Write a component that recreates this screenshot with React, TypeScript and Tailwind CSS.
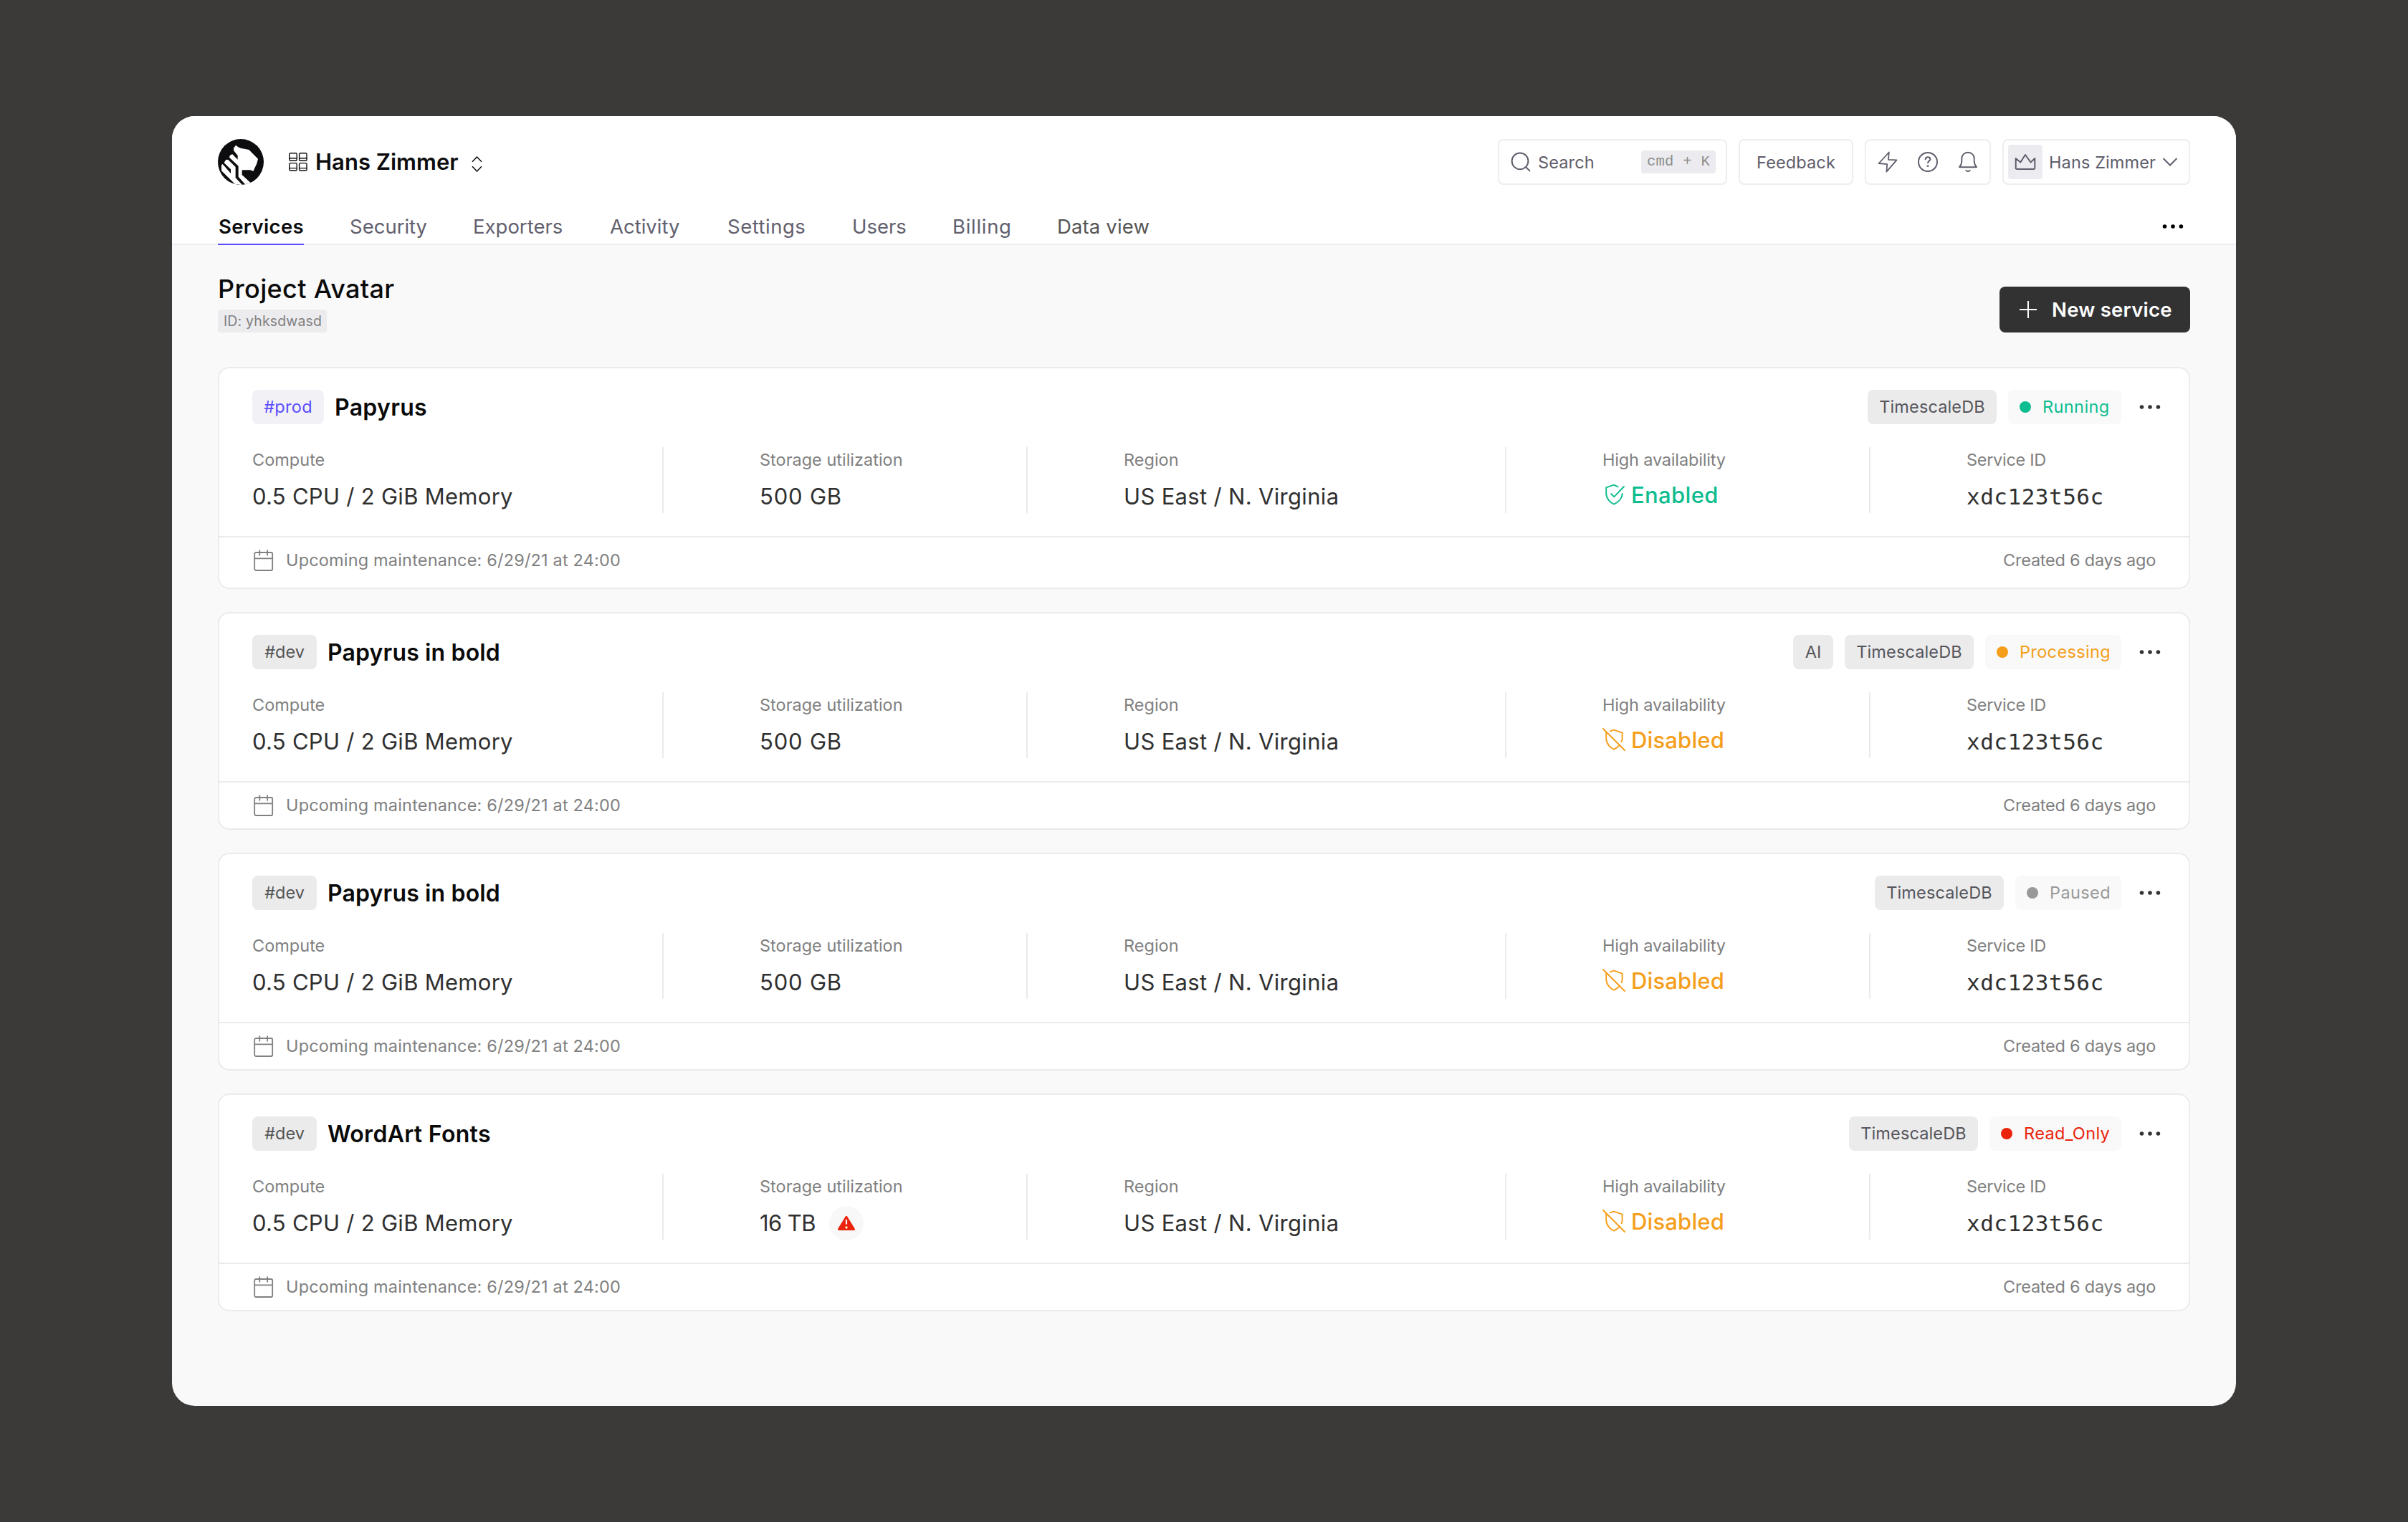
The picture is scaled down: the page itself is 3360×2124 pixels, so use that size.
import React from "react";

const stroke = {
  fill: "none",
  stroke: "currentColor",
  strokeWidth: 2,
  strokeLinecap: "round" as const,
  strokeLinejoin: "round" as const,
};

function Logo() {
  return (
    <svg className="size-16 shrink-0" viewBox="0 0 192 192">
      <defs>
        <clipPath id="logo-disc">
          <circle cx="96" cy="96" r="96" />
        </clipPath>
      </defs>
      <g clipPath="url(#logo-disc)">
        <rect width="192" height="192" fill="#0d0d0f" />
        <path
          fill="#fff"
          d="M66 38 L75 26 Q84 34 95 38 L130 45 L168 83 L163 103 L148 135 L137 130 L101 130 L101 150 L140 186 L118 194 L86 158 L86 113 L48 77 Q50 65 61 64 L83 86 L83 69 L66 48Z"
        />
        <path
          fill="#fff"
          d="M31 91 Q36 84 44 88 L74 117 L74 162 L104 194 L72 189 L15 133 L15 109 L20 105 L54 144 L54 127 L26 100Z"
        />
      </g>
    </svg>
  );
}

function GridIcon() {
  return (
    <svg className="h-[26px] w-[26px] shrink-0" viewBox="0 0 26 26" {...stroke} strokeWidth={1.4}>
      <rect x="0.8" y="0.8" width="10.4" height="10.4" rx="1.5" />
      <rect x="14.6" y="0.8" width="10.4" height="10.4" rx="1.5" />
      <rect x="0.8" y="14.6" width="10.4" height="10.4" rx="1.5" />
      <rect x="14.6" y="14.6" width="10.4" height="10.4" rx="1.5" />
      <path d="M1 7.8h10M15 7.8h10M1 21.6h10M15 21.6h10" />
    </svg>
  );
}

function SortIcon() {
  return (
    <svg className="h-[22px] w-[15px] shrink-0" viewBox="0 0 15 22" {...stroke} strokeWidth={1.5} strokeLinecap="butt" strokeLinejoin="miter">
      <path d="M1 7.8 7.5 1 14 7.8M1 14.2 7.5 21 14 14.2" />
    </svg>
  );
}

function SearchIcon() {
  return (
    <svg className="h-7 w-7 shrink-0" viewBox="0 0 28 28" {...stroke}>
      <circle cx="13" cy="12.8" r="11.4" />
      <path d="M21 21l5.4 5.4" />
    </svg>
  );
}

function ZapIcon() {
  return (
    <svg className="h-[30px] w-7 shrink-0" viewBox="0 0 28 30" {...stroke} strokeWidth={1.8}>
      <path d="M15.8 1.5 1.6 17l11.6 1.2L12.4 28.6 26.5 12.4l-11.6-.6z" />
    </svg>
  );
}

function HelpIcon() {
  return (
    <svg className="h-[30px] w-7 shrink-0" viewBox="0 0 28 30" {...stroke}>
      <circle cx="14" cy="15" r="13" />
      <path d="M10.6 11.4c.2-2 1.6-3.1 3.4-3.1s3.4 1.2 3.4 3c0 2.3-3.3 2.4-3.3 5" />
      <circle cx="14" cy="20.6" r=".5" />
    </svg>
  );
}

function BellIcon() {
  return (
    <svg className="h-[30px] w-7 shrink-0" viewBox="0 0 28 30" {...stroke} strokeWidth={1.9}>
      <path d="M2 22.2h24c-1.6-1.8-3.3-4.4-3.3-8.2v-3.7C22.7 5.3 19 1.7 14 1.7S5.3 5.3 5.3 10.3V14c0 3.8-1.7 6.4-3.3 8.2z" />
      <path d="M11.3 26.8c.7 1.5 4.7 1.5 5.4 0" />
    </svg>
  );
}

function CrownIcon() {
  return (
    <svg className="h-6 w-[30px]" viewBox="0 0 30 24" {...stroke}>
      <path d="M1.7 7v13.3c0 1 .7 1.7 1.7 1.7h23.2c1 0 1.7-.7 1.7-1.7V7l-5.8 5.5L15 2 8.3 12.5z" />
    </svg>
  );
}

function CalendarIcon() {
  return (
    <svg className="h-[30px] w-7 shrink-0" viewBox="0 0 28 30" {...stroke} strokeWidth={1.8}>
      <rect x="1.2" y="4" width="25" height="25" rx="2" />
      <path d="M1.2 12.3h25M8.3 1.2v6.6M19.1 1.2v6.6" />
    </svg>
  );
}

function ShieldOn() {
  return (
    <svg className="h-8 w-8 shrink-0" viewBox="0 0 32 32" {...stroke} strokeWidth={1.9}>
      <path d="M21.6 5.3 16 2.6 5.2 6.4V14.6C5.2 22 11 27.4 16 29.6c5.3-2.4 11.4-7.6 11.7-14.6" />
      <path d="M12 15.3l4.2 4L30 5" />
    </svg>
  );
}

function ShieldOff() {
  return (
    <svg className="h-8 w-8 shrink-0" viewBox="0 0 32 32" {...stroke} strokeWidth={1.9}>
      <path d="M1 1l30 30" />
      <path d="M10.7 4.3 16 2.6l11.6 4v8.2c0 1.600-.4 3-1 4.300M5.200 6v8.600C5.200 22 11 27.400 16 29.600c2.900-1.300 5.900-3.300 8.200-6" />
    </svg>
  );
}

function Dots() {
  return (
    <svg className="h-8 w-8 shrink-0" viewBox="0 0 32 32" fill="currentColor">
      <circle cx="4.5" cy="16" r="2.8" />
      <circle cx="16" cy="16" r="2.8" />
      <circle cx="27.4" cy="16" r="2.8" />
    </svg>
  );
}

function WarningBadge() {
  return (
    <span className="flex size-12 items-center justify-center rounded-full bg-[#f8f8f8]">
      <svg className="h-[22px] w-[26px]" viewBox="0 0 26 22">
        <path d="M13 2.2 23.6 19.6H2.4z" fill="#eb230c" stroke="#eb230c" strokeWidth="2.8" strokeLinejoin="round" />
        <path d="M13 6v6.5" stroke="#fff" strokeWidth="2.2" />
        <circle cx="13" cy="17" r="1.7" fill="#fff0d0" />
      </svg>
    </span>
  );
}

const tabs = [
  { name: "Security", cls: "w-[108px] text-[#62606e]" },
  { name: "Exporters", cls: "w-[127px] text-[#62606e]" },
  { name: "Activity", cls: "w-[100px] text-[#62606e]" },
  { name: "Settings", cls: "w-[110px] tracking-[0.5px] text-[#62606e]" },
  { name: "Users", cls: "w-[76px] text-[#62606e]" },
  { name: "Billing", cls: "w-[82px] tracking-[0.7px] text-[#62606e]" },
  { name: "Data view", cls: "w-[130px] tracking-[0.15px] text-[#555555]" },
];

function Header() {
  return (
    <header className="border-b-2 border-[#ededf2] bg-white px-16 pt-8">
      <div className="flex h-16 items-center justify-between">
        <div className="flex items-center">
          <Logo />
          <div className="ml-[35px] flex items-center text-[#0d0d0f]">
            <GridIcon />
            <span className="ml-[11px] text-[31px] leading-9 font-semibold">Hans Zimmer</span>
            <span className="mt-1.5 ml-[18px]">
              <SortIcon />
            </span>
          </div>
        </div>
        <div className="flex h-16 gap-4 text-[23.5px] tracking-[0.12px] text-[#5f5d6b]">
          <div className="flex w-80 items-center rounded-lg border-2 border-[#ededf2] pr-3.5 pl-4">
            <SearchIcon />
            <span className="mt-px ml-2.5">Search</span>
            <kbd className="ml-auto flex h-8 w-[104px] items-center justify-center rounded bg-[#ececf0] font-['Liberation_Mono',monospace] text-[20.5px] tracking-[0.3px] whitespace-pre text-[#8c8c8c]">
              cmd + K
            </kbd>
          </div>
          <div className="flex w-40 items-center justify-center rounded-lg border-2 border-[#ededf2] pt-px">Feedback</div>
          <div className="flex w-44 items-center justify-between rounded-lg border-2 border-[#ededf2] pr-4 pl-4">
            <ZapIcon />
            <HelpIcon />
            <BellIcon />
          </div>
          <div className="flex w-[262px] items-center rounded-lg border-2 border-[#ededf2] pl-1.5">
            <span className="flex size-12 items-center justify-center rounded bg-[#ececf0]">
              <CrownIcon />
            </span>
            <span className="mt-px ml-[9px] w-[158px] whitespace-nowrap">Hans Zimmer</span>
            <svg className="h-3 w-[22px]" viewBox="0 0 22 12" {...stroke} strokeLinecap="butt" strokeLinejoin="miter">
              <path d="M1.5 1 11 10.5 20.5 1" />
            </svg>
          </div>
        </div>
      </div>
      <div className="-mb-0.5 flex items-start justify-between pt-10">
        <nav className="flex gap-16 text-[27.5px] leading-9 whitespace-nowrap">
          <a className="w-[120px] border-b-2 border-[#5b4dff] pb-1.5 pl-px font-semibold tracking-[0.35px] text-[#0d0d0f]">Services</a>
          {tabs.map((t) => (
            <a key={t.name} className={t.cls}>
              {t.name}
            </a>
          ))}
        </nav>
        <span className="mt-0.5 mr-2 text-black">
          <Dots />
        </span>
      </div>
    </header>
  );
}

type Service = {
  tag: string;
  tagCls: string;
  name: string;
  nameCls: string;
  ai?: boolean;
  status: string;
  statusCls: string;
  storage: string;
  storageCls: string;
  warn?: boolean;
  enabled?: boolean;
  footCls: string;
};

const dev = { tag: "#dev", tagCls: "w-[90px] bg-[#ebebeb] text-[#555555]" };

const services: Service[] = [
  {
    tag: "#prod",
    tagCls: "w-[100px] bg-[#f2f2f6] tracking-[0.3px] text-[#5b4dff]",
    name: "Papyrus",
    nameCls: "tracking-[0.3px]",
    status: "Running",
    statusCls: "w-[158px] tracking-[0.4px] text-[#0dbd8f]",
    storage: "500 GB",
    storageCls: "tracking-[0.8px]",
    enabled: true,
    footCls: "pb-[22px]",
  },
  {
    ...dev,
    name: "Papyrus in bold",
    nameCls: "tracking-[0.15px]",
    ai: true,
    status: "Processing",
    statusCls: "w-[190px] tracking-[0.35px] text-[#f59e1b]",
    storage: "500 GB",
    storageCls: "tracking-[0.8px]",
    footCls: "pb-4",
  },
  {
    ...dev,
    name: "Papyrus in bold",
    nameCls: "tracking-[0.15px]",
    status: "Paused",
    statusCls: "w-[148px] tracking-[0.4px] text-[#999999]",
    storage: "500 GB",
    storageCls: "tracking-[0.8px]",
    footCls: "pb-4",
  },
  {
    ...dev,
    name: "WordArt Fonts",
    nameCls: "tracking-[0.3px]",
    status: "Read_Only",
    statusCls: "w-[184px] tracking-[0.35px] text-[#eb230c]",
    storage: "16 TB",
    storageCls: "tracking-[-0.6px]",
    warn: true,
    footCls: "pb-4",
  },
];

function Label({ children, cls = "" }: { children: React.ReactNode; cls?: string }) {
  return <div className={`pt-0.5 text-[23.5px] leading-8 text-[#808080] ${cls}`}>{children}</div>;
}

const cell = "border-l-2 border-[#ebebeb] pl-[134px]";
const value = "mt-[15px] text-[31px] leading-10 text-[#303030]";
const pill = "flex h-12 items-center rounded-lg text-[23.5px]";

function Card({ s }: { s: Service }) {
  return (
    <article className="rounded-2xl border-2 border-[#ebebeb] bg-white">
      <div className="flex items-center px-[46px] pt-[30px]">
        <span className={`${pill} justify-center ${s.tagCls}`}>{s.tag}</span>
        <h2 className={`mt-px ml-[15px] text-[32px] leading-10 font-semibold text-[#0a0a0a] ${s.nameCls}`}>{s.name}</h2>
        <div className="-mr-2 ml-auto flex items-center gap-4">
          {s.ai && <span className={`${pill} w-14 justify-center bg-[#ebebeb] text-[#55555c]`}>AI</span>}
          <span className={`${pill} w-[180px] justify-center bg-[#ebebeb] tracking-[0.12px] text-[#55555c]`}>TimescaleDB</span>
          <span className={`${pill} gap-4 bg-[#f9f9f9] pl-4 whitespace-nowrap ${s.statusCls}`}>
            <i className="size-4 shrink-0 rounded-full bg-current" />
            {s.status}
          </span>
          <span className="ml-2 text-[#333333]">
            <Dots />
          </span>
        </div>
      </div>
      <div className="mt-8 grid h-[92px] grid-cols-[572px_508px_668px_508px_1fr] px-[46px] whitespace-nowrap">
        <div>
          <Label>Compute</Label>
          <div className={`${value} tracking-[0.28px]`}>0.5 CPU / 2 GiB Memory</div>
        </div>
        <div className={cell}>
          <Label>Storage utilization</Label>
          <div className={`${value} flex h-10 items-center gap-[19px] ${s.storageCls}`}>
            {s.storage}
            {s.warn && <WarningBadge />}
          </div>
        </div>
        <div className={cell}>
          <Label>Region</Label>
          <div className={`${value} tracking-[0.32px]`}>US East / N. Virginia</div>
        </div>
        <div className={cell}>
          <Label cls="tracking-[-0.17px]">High availability</Label>
          <div
            className={`mt-[13px] flex items-center gap-2 text-[31px] leading-10 font-medium ${
              s.enabled ? "tracking-[0.35px] text-[#0dbd8f]" : "tracking-[0.15px] text-[#f59e1b]"
            }`}
          >
            <span className="mb-0.5">{s.enabled ? <ShieldOn /> : <ShieldOff />}</span>
            {s.enabled ? "Enabled" : "Disabled"}
          </div>
        </div>
        <div className={cell}>
          <Label cls="tracking-[-0.3px]">Service ID</Label>
          <div className="mt-[15px] font-['DejaVu_Sans_Mono',monospace] text-[31px] leading-10 tracking-[0.5px] text-[#303030]">
            xdc123t56c
          </div>
        </div>
      </div>
      <div
        className={`mt-8 flex items-center border-t-2 border-[#ebebeb] px-[46px] pt-4 text-[23.5px] leading-8 text-[#808080] ${s.footCls}`}
      >
        <span className="ml-0.5">
          <CalendarIcon />
        </span>
        <span className="ml-[17px] tracking-[0.17px]">Upcoming maintenance: 6/29/21 at 24:00</span>
        <span className="ml-auto tracking-[-0.24px]">Created 6 days ago</span>
      </div>
    </article>
  );
}

export default function App() {
  return (
    <div className="flex h-[2124px] w-[3360px] justify-center bg-[#3b3a38] pt-[162px] font-['Inter',sans-serif]">
      <div className="flex h-[1800px] w-[2880px] flex-col overflow-hidden rounded-[32px] bg-[#f9f9f9]">
        <Header />
        <main className="flex flex-col px-16 pt-[43px]">
          <div className="mb-12 flex items-end justify-between">
            <div>
              <h1 className="text-[36px] leading-9 font-medium tracking-[0.35px] text-[#0a0a0a]">Project Avatar</h1>
              <div className="mt-[11px] flex h-8 w-[152px] items-center justify-center rounded bg-[#ececef] pt-px pl-px text-[19.5px] tracking-[0.16px] text-[#808080]">
                ID: yhksdwasd
              </div>
            </div>
            <button className="flex h-16 w-[266px] items-center rounded-lg bg-[#323232] pl-[27px] text-[27.5px] font-semibold tracking-[0.25px] text-white">
              <svg className="size-[26px]" viewBox="0 0 26 26" fill="none" stroke="currentColor" strokeWidth="2">
                <path d="M13 1v24M1 13h24" />
              </svg>
              <span className="mt-px ml-5">New service</span>
            </button>
          </div>
          <div className="flex flex-col gap-8">
            {services.map((s, i) => (
              <Card key={i} s={s} />
            ))}
          </div>
        </main>
      </div>
    </div>
  );
}
